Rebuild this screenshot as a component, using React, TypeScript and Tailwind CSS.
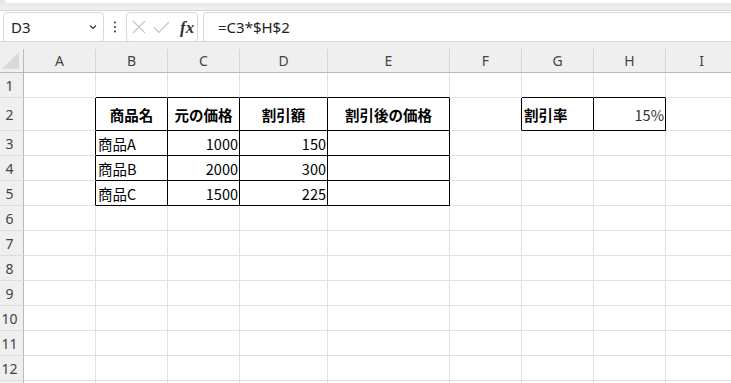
import React from "react";

type Cell = { text: string; align: "left" | "right" | "center"; bold?: boolean; muted?: boolean };

const COLS = ["A", "B", "C", "D", "E", "F", "G", "H", "I"];
const ROWS = [1, 2, 3, 4, 5, 6, 7, 8, 9, 10, 11, 12, 13];

const cells: Record<string, Cell> = {
  B2: { text: "商品名", align: "center", bold: true },
  C2: { text: "元の価格", align: "center", bold: true },
  D2: { text: "割引額", align: "center", bold: true },
  E2: { text: "割引後の価格", align: "center", bold: true },
  G2: { text: "割引率", align: "left", bold: true },
  H2: { text: "15%", align: "right", muted: true },
  B3: { text: "商品A", align: "left" },
  C3: { text: "1000", align: "right" },
  D3: { text: "150", align: "right" },
  B4: { text: "商品B", align: "left" },
  C4: { text: "2000", align: "right" },
  D4: { text: "300", align: "right" },
  B5: { text: "商品C", align: "left" },
  C5: { text: "1500", align: "right" },
  D5: { text: "225", align: "right" },
};

// bordered ranges: [colStart, colEnd, rowStart, rowEnd], columns 0 = A
const boxes = [
  [1, 4, 2, 5],
  [6, 7, 2, 2],
];

const inBox = (c: number, r: number) =>
  boxes.some(([c0, c1, r0, r1]) => c >= c0 && c <= c1 && r >= r0 && r <= r1);

// last column runs past the window edge
const GRID = "grid grid-cols-[24px_72px_72px_72px_88px_122px_72px_72px_72px_72px]";

function TopBar() {
  return (
    <>
      <div className="h-[11px] bg-gradient-to-b from-[#e4e4e4] to-[#f1f1f1] border-b border-[#d4d4d4] pl-[5px]">
        <div className="h-[3px] bg-white rounded-bl-[4px]" />
      </div>
      <div className="h-[31px] bg-white border-b border-[#d6d6d6] flex items-start pl-[3px]">
        <div className="mt-[1px] w-[101px] h-[30px] rounded-[4px] border border-[#d9d9d9] bg-white flex items-center justify-between pl-[7px] pr-[5px]">
          <span className="text-[15px] text-[#222]">D3</span>
          <svg width="10" height="10" viewBox="0 0 10 10">
            <path d="M2 3.5 L5 6.5 L8 3.5" fill="none" stroke="#333" strokeWidth="1.2" />
          </svg>
        </div>
        <div className="w-[22px] h-[30px] mt-[1px] flex items-center justify-center">
          <svg width="4" height="14" viewBox="0 0 4 14">
            <circle cx="2" cy="2.5" r="1.1" fill="#444" />
            <circle cx="2" cy="7" r="1.1" fill="#444" />
            <circle cx="2" cy="11.5" r="1.1" fill="#444" />
          </svg>
        </div>
        <div className="mt-[1px] w-[72px] h-[30px] rounded-[4px] border border-[#d9d9d9] bg-white flex items-center pl-[4px] gap-[6px]">
          <svg width="16" height="16" viewBox="0 0 16 16">
            <path d="M2 2 L14 14 M14 2 L2 14" stroke="#c4c4c4" strokeWidth="1.1" />
          </svg>
          <svg width="17" height="16" viewBox="0 0 17 16">
            <path d="M1 8.5 L6 13.5 L16 3" fill="none" stroke="#c4c4c4" strokeWidth="1.1" />
          </svg>
          <span className="font-['Liberation_Serif',serif] italic font-bold text-[17px] text-[#333] leading-none ml-[4px]">
            fx
          </span>
        </div>
        <div className="mt-[1px] ml-[5px] flex-1 h-[30px] rounded-l-[4px] border border-r-0 border-[#d9d9d9] bg-white flex items-center pl-[14px]">
          <span className="text-[15px] text-[#222]">=C3*$H$2</span>
        </div>
      </div>
    </>
  );
}

function HeaderRow() {
  return (
    <div className="bg-[#efefef]">
      <div className="h-[7px]" />
      <div className={`${GRID} h-[24px] border-b border-[#b9b9b9]`}>
        <div className="border-r border-[#b9b9b9] flex items-end justify-center pb-[3px]">
          <svg width="18" height="17" viewBox="0 0 18 17" className="ml-[-2px]">
            <path d="M17 0 L17 17 L0 17 Z" fill="#d9d9d9" />
          </svg>
        </div>
        {COLS.map((c) => (
          <div
            key={c}
            className="border-r border-[#d6d6d6] flex items-center justify-center text-[14px] text-[#444]"
          >
            {c}
          </div>
        ))}
      </div>
    </div>
  );
}

function SheetRow({ r }: { r: number }) {
  const height = r === 2 ? "h-[33px]" : "h-[25px]";
  return (
    <div className={`${GRID} ${height}`}>
      <div className="bg-[#efefef] border-r border-r-[#b9b9b9] border-b border-b-[#dcdcdc] flex items-center justify-center pr-[4px] text-[14px] text-[#444]">
        {r <= 12 ? r : ""}
      </div>
      {COLS.map((c, ci) => {
        const right = inBox(ci, r) || inBox(ci + 1, r);
        const bottom = inBox(ci, r) || inBox(ci, r + 1);
        const cell = cells[`${c}${r}`];
        return (
          <div
            key={c}
            className={`border-r border-b flex items-center pt-[1px] overflow-visible whitespace-nowrap ${
              right ? "border-r-black" : "border-r-[#e1e1e1]"
            } ${bottom ? "border-b-black" : "border-b-[#e1e1e1]"} ${
              cell?.align === "right"
                ? "justify-end pr-[1px]"
                : cell?.align === "center"
                ? "justify-center"
                : "justify-start pl-[2px]"
            }`}
          >
            {cell && (
              <span
                className={`font-['Noto_Sans_CJK_JP',sans-serif] text-[14.5px] ${
                  cell.bold ? "font-bold text-black" : cell.muted ? "text-[#333]" : "text-black"
                }`}
              >
                {cell.text}
              </span>
            )}
          </div>
        );
      })}
    </div>
  );
}

export default function App() {
  return (
    <div className="w-[731px] h-[383px] overflow-hidden bg-white font-['Noto_Sans',sans-serif]">
      <TopBar />
      <HeaderRow />
      {ROWS.map((r) => (
        <SheetRow key={r} r={r} />
      ))}
    </div>
  );
}
